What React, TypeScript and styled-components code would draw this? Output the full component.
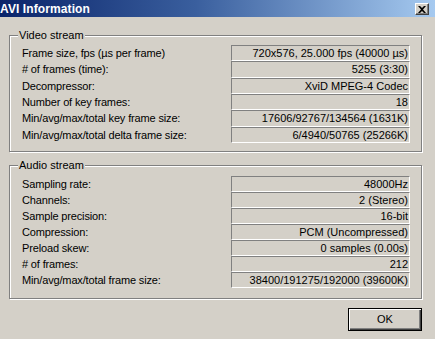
import styled, { createGlobalStyle } from 'styled-components';

const GlobalStyle = createGlobalStyle`
  html, body {
    margin: 0;
    padding: 0;
    background: #d4d0c8;
  }
  body {
    font-family: 'Liberation Sans', Arial, sans-serif;
    font-size: 11px;
    color: #000000;
  }
`;

const SWindow = styled.div`
  width: 435px;
  height: 339px;
  background: #d4d0c8;
  display: flex;
  flex-direction: column;
  overflow: hidden;
`;

const STitleBar = styled.div`
  height: 17px;
  display: flex;
  align-items: center;
  justify-content: space-between;
  padding: 0 6px 0 0;
  background: linear-gradient(to right, #0a246a 0%, #3a5f9e 45%, #a6caf0 100%);
`;

const STitle = styled.span`
  color: #ffffff;
  font-weight: 700;
  font-size: 12px;
  letter-spacing: 0.1px;
`;

const SCloseBtn = styled.button`
  width: 14px;
  height: 12px;
  padding: 0;
  margin-top: 1px;
  display: flex;
  align-items: center;
  justify-content: center;
  background: #d4d0c8;
  border: 1px solid;
  border-color: #ffffff #404040 #404040 #ffffff;
  box-shadow: inset -1px -1px 0 #808080;
`;

const SBody = styled.div`
  flex: 1;
  display: flex;
  flex-direction: column;
  padding: 18px 13px 0 9px;
`;

const SGroup = styled.div<{ $top: number; $padTop: number; $padBottom: number }>`
  position: relative;
  margin-top: ${(p) => p.$top}px;
  border: 1px solid #808080;
  box-shadow: inset 1px 1px 0 #ffffff, 1px 1px 0 #ffffff;
  padding: ${(p) => p.$padTop}px 11px ${(p) => p.$padBottom}px 12px;
`;

const SLegend = styled.span`
  position: absolute;
  top: -7px;
  left: 8px;
  padding: 0 1px;
  background: #d4d0c8;
  line-height: 13px;
`;

const SRows = styled.div<{ $pitch: number }>`
  display: grid;
  grid-template-columns: 1fr 179px;
  grid-auto-rows: ${(p) => p.$pitch}px;
  align-items: stretch;
`;

const SLabel = styled.span`
  display: flex;
  align-items: center;
  white-space: nowrap;
  letter-spacing: -0.15px;
`;

const SValue = styled.span`
  display: flex;
  align-items: center;
  justify-content: flex-end;
  padding-right: 1px;
  border: 1px solid;
  border-color: #808080 #ffffff #ffffff #808080;
  white-space: nowrap;
`;

const SFooter = styled.div`
  display: flex;
  justify-content: flex-end;
  padding-top: 9px;
`;

const SOkBtn = styled.button`
  width: 74px;
  height: 23px;
  font-family: 'Liberation Sans', Arial, sans-serif;
  font-size: 11px;
  color: #000000;
  background: #d4d0c8;
  border: 1px solid #000000;
  box-shadow: inset 1px 1px 0 #ffffff, inset -1px -1px 0 #404040,
    inset -2px -2px 0 #808080;
  padding: 0;
`;

type Row = [string, string];

const videoRows: Row[] = [
  ['Frame size, fps (µs per frame)', '720x576, 25.000 fps (40000 µs)'],
  ['# of frames (time):', '5255 (3:30)'],
  ['Decompressor:', 'XviD MPEG-4 Codec'],
  ['Number of key frames:', '18'],
  ['Min/avg/max/total key frame size:', '17606/92767/134564 (1631K)'],
  ['Min/avg/max/total delta frame size:', '6/4940/50765 (25266K)'],
];

const audioRows: Row[] = [
  ['Sampling rate:', '48000Hz'],
  ['Channels:', '2 (Stereo)'],
  ['Sample precision:', '16-bit'],
  ['Compression:', 'PCM (Uncompressed)'],
  ['Preload skew:', '0 samples (0.00s)'],
  ['# of frames:', '212'],
  ['Min/avg/max/total frame size:', '38400/191275/192000 (39600K)'],
];

type InfoGroupProps = {
  title: string;
  rows: Row[];
  top: number;
  padTop: number;
  padBottom: number;
  pitch: number;
};

const InfoGroup = ({ title, rows, top, padTop, padBottom, pitch }: InfoGroupProps) => (
  <SGroup $top={top} $padTop={padTop} $padBottom={padBottom}>
    <SLegend>{title}</SLegend>
    <SRows $pitch={pitch}>
      {rows.map(([label, value]) => [
        <SLabel key={`l-${label}`}>{label}</SLabel>,
        <SValue key={`v-${label}`}>{value}</SValue>,
      ])}
    </SRows>
  </SGroup>
);

const App = () => {
  return (
    <>
      <GlobalStyle />
      <SWindow>
        <STitleBar>
          <STitle>AVI Information</STitle>
          <SCloseBtn aria-label='Close'>
            <svg width='8' height='7' viewBox='0 0 8 7'>
              <path
                d='M0 0h2l2 2 2-2h2L5 3.5 8 7H6L4 5 2 7H0l3-3.5z'
                fill='#000000'
              />
            </svg>
          </SCloseBtn>
        </STitleBar>
        <SBody>
          <InfoGroup
            title='Video stream'
            rows={videoRows}
            top={0}
            padTop={9}
            padBottom={8}
            pitch={16.33}
          />
          <InfoGroup
            title='Audio stream'
            rows={audioRows}
            top={13}
            padTop={10}
            padBottom={10}
            pitch={16}
          />
          <SFooter>
            <SOkBtn>OK</SOkBtn>
          </SFooter>
        </SBody>
      </SWindow>
    </>
  );
};

export default App;
